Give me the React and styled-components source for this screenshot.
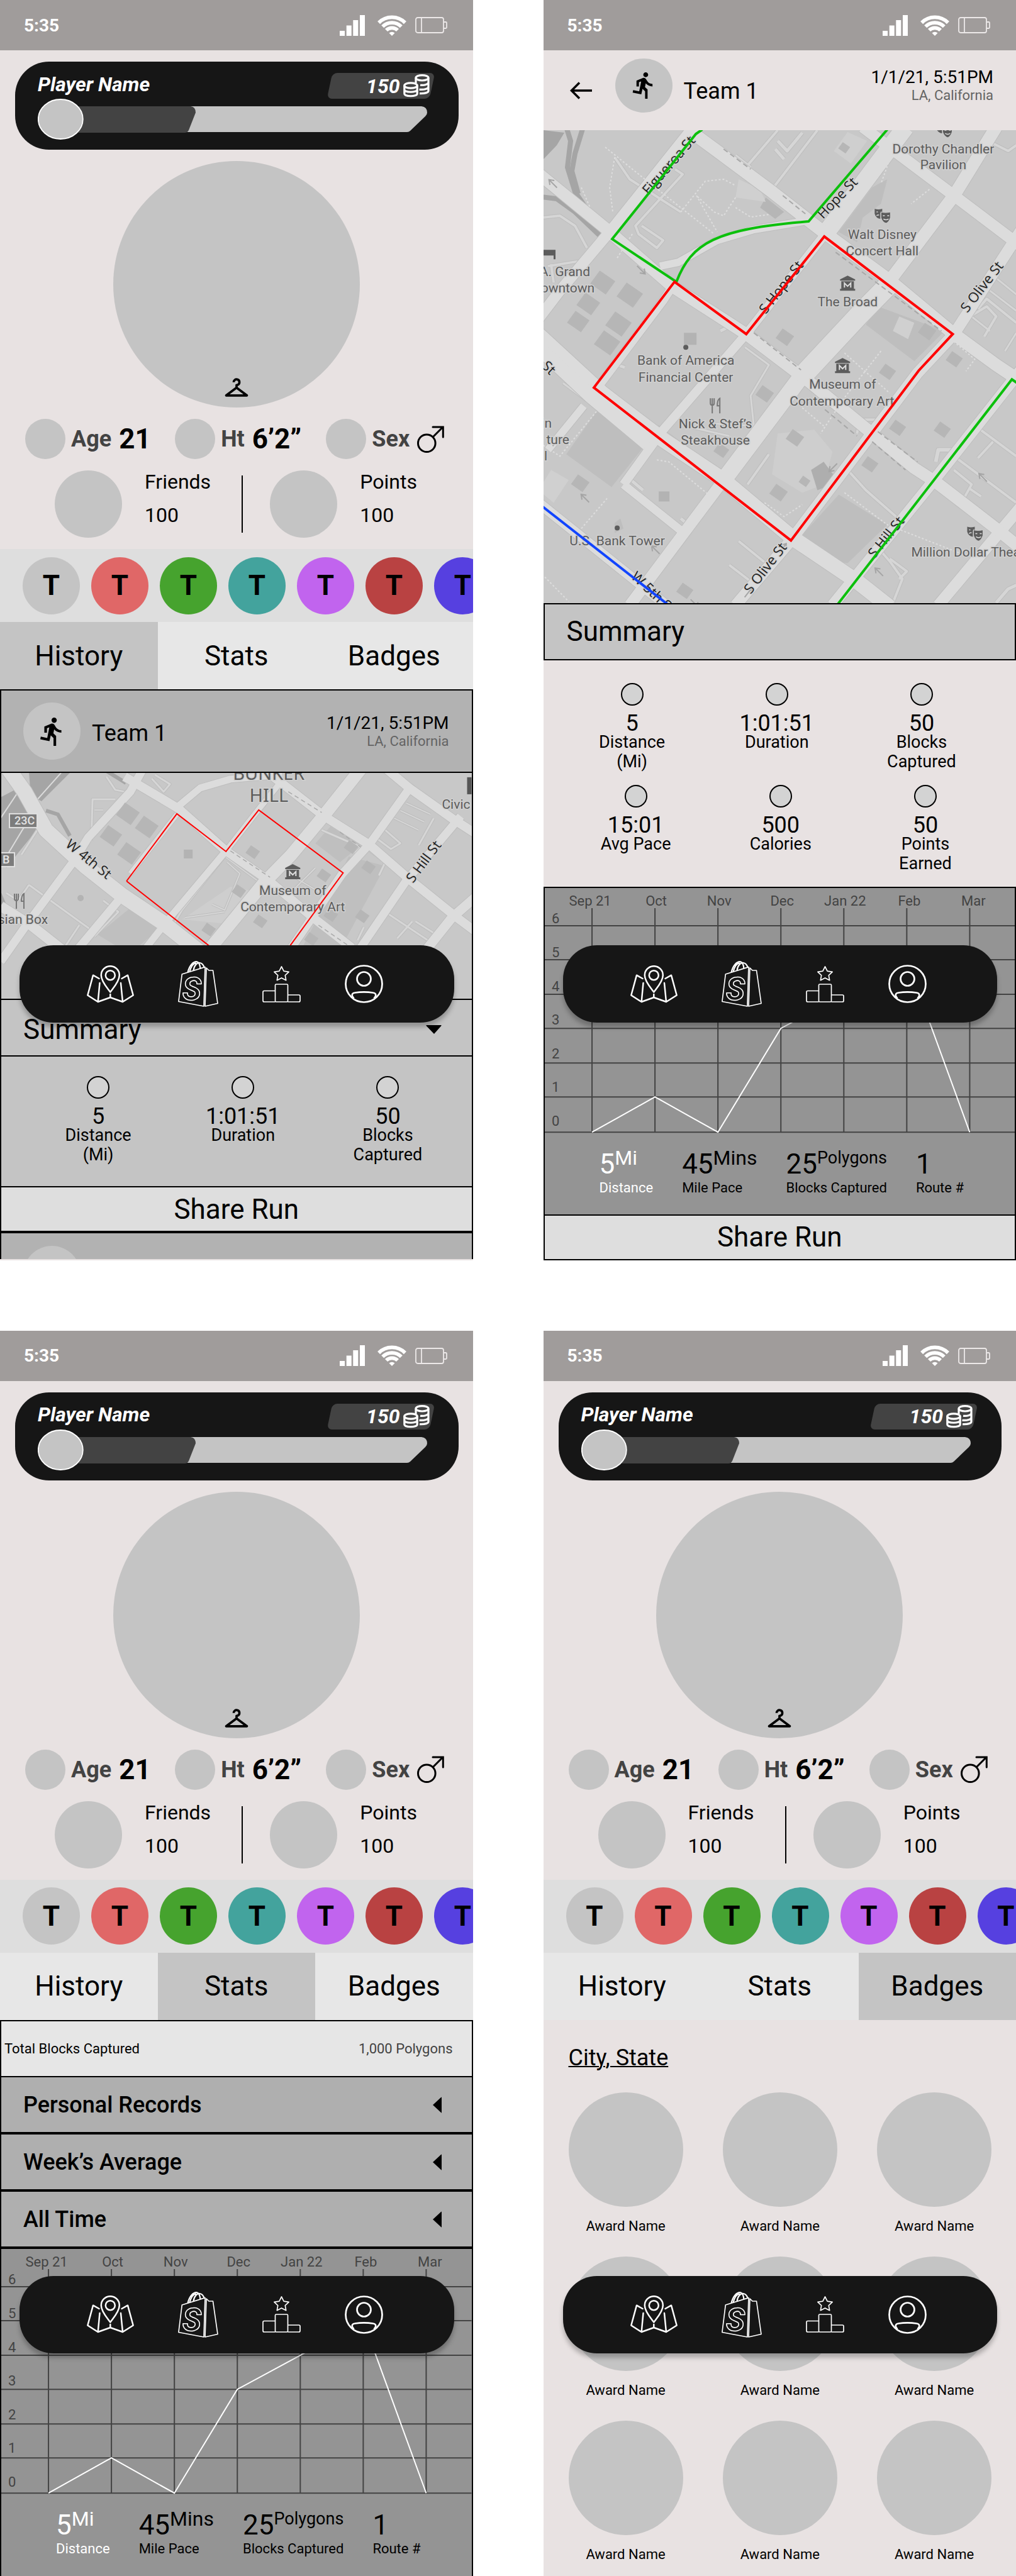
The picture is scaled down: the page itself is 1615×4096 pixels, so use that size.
import React, { useState } from "react";
import styled, { createGlobalStyle } from "styled-components";
import { MdCheckroom, MdDirectionsRun } from "react-icons/md";

const GlobalStyle = createGlobalStyle`
  *, *::before, *::after { box-sizing: border-box; }
  body { margin: 0; background: #fff; color: #000; font-family: Roboto, "Liberation Sans", sans-serif; }
  button { font: inherit; color: inherit; background: none; border: 0; padding: 0; margin: 0; cursor: pointer; }
  svg { display: block; }
  p, h1, h2, h3, ul, dl, dd, dt { margin: 0; padding: 0; font-weight: 400; }
`;

/* ---------- shell ---------- */

const Board = styled.main`
  display: grid;
  grid-template-columns: 1fr 1fr;
  column-gap: 112px;
  row-gap: 112px;
`;

const Screen = styled.section`
  position: relative;
  display: flex;
  flex-direction: column;
  min-width: 0;
  overflow: hidden;
  background: #e8e2e2;
`;

const StatusBarRoot = styled.header`
  display: flex;
  align-items: center;
  justify-content: space-between;
  height: 80px;
  padding: 0 41px 0 38px;
  background: #a09c9b;
  color: #fff;
  font-size: 28px;
  font-weight: 700;
`;

const StatusIcons = styled.div`
  display: flex;
  align-items: center;

  svg + svg { margin-left: 20px; }
  svg:last-child { margin-left: 14px; }
`;

function StatusBar() {
  return (
    <StatusBarRoot>
      <span>5:35</span>
      <StatusIcons aria-hidden="true">
        <svg width="40" height="33" viewBox="0 0 40 33" fill="#fff">
          <path d="M0 25h8v8H0zM10.7 16.5h8V33h-8zM21.3 8h8v25h-8zM32 0h8v33h-8z" />
        </svg>
        <svg width="46" height="33" viewBox="0 0 46 33" fill="none" stroke="#fff" strokeWidth="5.8">
          <path d="M2.1 12.1a29.5 29.5 0 0 1 41.8 0" />
          <path d="M8.2 18.2a21 21 0 0 1 29.6 0" />
          <path d="M14 24a12.8 12.8 0 0 1 18 0" />
          <path d="M23 33l-4.5-4.5a6.4 6.4 0 0 1 9 0z" fill="#fff" stroke="none" />
        </svg>
        <svg width="51" height="26" viewBox="0 0 51 26" fill="none" stroke="#ece8e8" strokeWidth="1.8">
          <rect x="1" y="1" width="44" height="24" rx="3" />
          <path d="M10 1v24M45 8h3.5q1.500 0 1.500 1.500v7q0 1.500-1.500 1.500H45" />
        </svg>
      </StatusIcons>
    </StatusBarRoot>
  );
}

/* ---------- floating navigation ---------- */

const NavBar = styled.nav`
  position: absolute;
  top: 1503px;
  left: 31px;
  right: 30px;
  display: flex;
  align-items: center;
  gap: 70px;
  height: 123px;
  padding-left: 107px;
  border-radius: 54px;
  background: #161616;
  box-shadow: 0 7px 7px rgba(0, 0, 0, 0.25);
`;

const NavButton = styled.button`
  display: flex;
  align-items: center;
  height: 73px;
`;

const MapIcon = () => (
  <svg width="75" height="60" viewBox="0 0 75 60" fill="none" stroke="#fff" strokeWidth="2.5" strokeLinecap="round" strokeLinejoin="round">
    <path d="M37.300 42.500C34 37.500 22.800 26 22.800 15.700a14.500 14.500 0 0 1 29 0C51.800 26 40.600 37.500 37.300 42.500z" />
    <circle cx="37.300" cy="15.700" r="7.500" />
    <path d="M19.500 21L10 15.700 1.300 47.500 17.700 58l19.600-7L57 58l16.700-10.500L65 15.700 55.500 21M20.500 28l-2.800 30M54 28l3 30M37.300 46v5" />
  </svg>
);

const ShopIcon = () => (
  <svg width="64" height="73" viewBox="0 0 64 73" fill="none" stroke="#fff" strokeWidth="1.700" strokeLinejoin="round">
    <path d="M6.300 21L43 9.600 41 72 .9 64.500zM45 11l4 4h6.500l7.500 52.500L43 72z" />
    <path d="M15.500 18C18 7 24 1 29.500 1.200 33.500 1.500 35 8 35.500 12M24.500 15c1-8 6-12.500 10-12 4 .5 6 4 7 7M18.500 17C21 8 25 3.500 29 3.500" strokeWidth="2.200" />
    <text x="7" y="62" fontFamily="Roboto, sans-serif" fontWeight="700" fontStyle="italic" fontSize="50" strokeWidth="1.600">S</text>
  </svg>
);

const PodiumIcon = () => (
  <svg width="61" height="58" viewBox="0 0 61 58" fill="none" stroke="#fff" strokeWidth="1.700" strokeLinejoin="round">
    <rect x="20.500" y="29" width="20" height="28" rx="1.500" />
    <path d="M20.500 39.500H3q-2 0-2 2V55q0 2 2 2h17.500M40.500 46H58q2 0 2 2v7q0 2-2 2H40.500" />
    <path d="M30.500 1l3.600 7.200 8 1.100-5.800 5.500 1.400 7.900-7.200-3.800-7.200 3.800 1.400-7.900-5.800-5.500 8-1.100z" />
  </svg>
);

const UserIcon = () => (
  <svg width="61" height="61" viewBox="0 0 61 61" fill="none" stroke="#fff" strokeWidth="2.700">
    <circle cx="30.500" cy="30.500" r="29" />
    <circle cx="30.500" cy="22.500" r="11" />
    <path d="M14.500 53.500C9.500 48 12 45 16 44.500q14.500-2.200 29 0c4 .5 6.500 3.500 1.500 9" />
  </svg>
);

function BottomNav() {
  return (
    <NavBar aria-label="Main">
      <NavButton aria-label="Map"><MapIcon /></NavButton>
      <NavButton aria-label="Shop"><ShopIcon /></NavButton>
      <NavButton aria-label="Leaderboard"><PodiumIcon /></NavButton>
      <NavButton aria-label="Profile"><UserIcon /></NavButton>
    </NavBar>
  );
}

/* ---------- profile ---------- */

const Dot = styled.span`
  flex: none;
  display: block;
  width: ${(p) => p.$size}px;
  height: ${(p) => p.$height || p.$size}px;
  border-radius: 50%;
  background: #c4c4c4;
`;

const ProfileRoot = styled.div`
  display: flex;
  flex-direction: column;
  gap: 18px;
  padding: 18px 0;
`;

const PlayerCard = styled.div`
  height: 140px;
  margin: 0 23px 0 24px;
  padding: 18px 38px 17px 36px;
  border-radius: 54px;
  background: #161616;
  color: #fff;
`;

const PlayerTop = styled.div`
  display: flex;
  align-items: center;
  justify-content: space-between;
  height: 41px;
  font-size: 32px;
  line-height: 36px;
  font-weight: 700;
  font-style: italic;
`;

const PlayerName = styled.h1`
  font-size: inherit;
  font-weight: inherit;
  padding-bottom: 6px;
`;

const CoinPill = styled.div`
  position: relative;
  display: flex;
  align-items: center;
  justify-content: flex-end;
  gap: 5px;
  width: 171px;
  height: 41px;
  padding-right: 8px;
  isolation: isolate;

  &::before {
    content: "";
    position: absolute;
    z-index: -1;
    inset: 0 4px;
    border-radius: 8px;
    background: #434343;
    transform: skewX(-12deg);
  }
`;

const Gauge = styled.svg`
  width: 100%;
  height: 65px;
`;

const Avatar = styled.div`
  display: flex;
  justify-content: center;
  align-items: flex-end;
  align-self: center;
  width: 392px;
  height: 392px;
  padding-bottom: 10px;
  border-radius: 50%;
  background: #c4c4c4;
`;

const Facts = styled.dl`
  display: grid;
  grid-template-columns: 238fr 240fr 194fr;
  padding: 0 39px 0 40px;
`;

const Fact = styled.div`
  display: flex;
  align-items: center;
  height: 64px;
  white-space: nowrap;

  dt {
    margin-left: 9px;
    font-size: 36px;
    font-weight: 700;
    color: #434343;
  }

  dd {
    margin-left: 12px;
    font-size: 44px;
    font-weight: 700;
  }
`;

const Counters = styled.div`
  display: flex;
  height: 107px;
  padding-left: 87px;
`;

const Counter = styled.div`
  display: flex;
  gap: 36px;
  flex: 297 1 0;
  font-size: 32px;
  line-height: 36px;

  &:last-child { flex-grow: 322; }
`;

const CounterText = styled.div`
  display: flex;
  flex-direction: column;
  gap: 17px;
`;

const Divider = styled.span`
  align-self: center;
  width: 2px;
  height: 91px;
  margin-right: 43px;
  background: #000;
`;

const Teams = styled.ul`
  display: flex;
  align-items: center;
  gap: 18px;
  height: 116px;
  padding-left: 36px;
  overflow: hidden;
  background: #dedede;
  list-style: none;
`;

const TeamBadge = styled.button`
  display: grid;
  place-items: center;
  width: 91px;
  height: 91px;
  border-radius: 50%;
  background: ${(p) => p.$color};
  font-size: 44px;
  font-weight: 700;
`;

const Tabs = styled.div`
  display: grid;
  grid-template-columns: 1fr 1fr 1fr;
  height: 107px;
`;

const Tab = styled.button`
  font-size: 44px;
  background: ${(p) => (p.$active ? "#c4c4c4" : "#e7e7e7")};
`;

const teamColors = ["#c4c4c4", "#e06767", "#46a32e", "#43a39d", "#c164ee", "#b94242", "#5640e0"];

const Coins = () => (
  <svg width="42" height="37" viewBox="0 0 42 37" fill="none" stroke="#fff" strokeWidth="3.200" aria-hidden="true">
    <ellipse cx="30" cy="5.800" rx="10" ry="4.200" />
    <path d="M20 6v8M40 6v20.500c0 2.500-5 4.500-14 4.100M40 13c0 3-6 5-13 4.300M40 20c0 3-6 5-14.500 4.300" />
    <ellipse cx="12" cy="18" rx="10.200" ry="4.200" />
    <path d="M1.800 18v13c0 5 20.400 5 20.400 0V18M1.800 24.500c0 5 20.400 5 20.400 0" />
  </svg>
);

const MaleIcon = () => (
  <svg width="43" height="43" viewBox="0 0 43 43" fill="none" stroke="#000" strokeWidth="3" strokeLinecap="round" role="img" aria-label="Male">
    <circle cx="15.300" cy="27.700" r="13.800" />
    <path d="M26 17L41 2M25 2h16.300v16" />
  </svg>
);

function Profile({ tab, onTab }) {
  return (
    <>
      <ProfileRoot>
        <PlayerCard>
          <PlayerTop>
            <PlayerName>Player Name</PlayerName>
            <CoinPill>
              150
              <Coins />
            </CoinPill>
          </PlayerTop>
          <Gauge viewBox="0 0 630 65" preserveAspectRatio="xMinYMid meet" role="img" aria-label="Level progress">
            <path d="M60 12H610q9 1 9 10 0 3-3 6L592 51q-2 2-5 2H60z" fill="#c4c4c4" />
            <path d="M60 12H243q8 1 8 10L240 50q-2 4-6 4H60z" fill="#434343" />
            <ellipse cx="36.300" cy="32.500" rx="35.500" ry="31.500" fill="#c4c4c4" stroke="#fff" strokeWidth="1.800" />
          </Gauge>
        </PlayerCard>
        <Avatar>
          <MdCheckroom size={44} aria-label="Change outfit" />
        </Avatar>
        <Facts>
          <Fact><Dot $size={64} /><dt>Age</dt><dd>21</dd></Fact>
          <Fact><Dot $size={64} /><dt>Ht</dt><dd>6’2”</dd></Fact>
          <Fact><Dot $size={64} /><dt>Sex</dt><dd><MaleIcon /></dd></Fact>
        </Facts>
        <Counters>
          <Counter>
            <Dot $size={107} />
            <CounterText><span>Friends</span><span>100</span></CounterText>
          </Counter>
          <Divider />
          <Counter>
            <Dot $size={107} />
            <CounterText><span>Points</span><span>100</span></CounterText>
          </Counter>
        </Counters>
      </ProfileRoot>
      <Teams>
        {teamColors.map((color) => (
          <li key={color}><TeamBadge $color={color}>T</TeamBadge></li>
        ))}
      </Teams>
      <Tabs role="tablist">
        {["History", "Stats", "Badges"].map((name) => (
          <Tab key={name} role="tab" aria-selected={tab === name} $active={tab === name} onClick={() => onTab && onTab(name)}>
            {name}
          </Tab>
        ))}
      </Tabs>
    </>
  );
}

/* ---------- run header, summary, share ---------- */

const RunHeader = styled.div`
  display: flex;
  align-items: center;
  height: ${(p) => p.$height}px;
  padding: 0 36px ${(p) => p.$bottom || 0}px ${(p) => p.$left}px;
`;

const RunBadge = styled.span`
  display: grid;
  place-items: center;
  flex: none;
  width: 91px;
  height: ${(p) => p.$height}px;
  border-radius: 50%;
  background: #c4c4c4;
`;

const RunTeam = styled.h2`
  flex: 1;
  padding: ${(p) => p.$drop}px 0 0 18px;
  font-size: 36px;
  line-height: 42px;
`;

const RunWhen = styled.div`
  text-align: right;
  font-size: 28px;
  line-height: 32px;

  small {
    display: block;
    font-size: 22px;
    line-height: 26px;
    color: #646464;
  }
`;

const BackButton = styled.button`
  margin: 16px 37px 0 0;
`;

const SummaryBar = styled.button`
  display: flex;
  align-items: center;
  justify-content: space-between;
  width: 100%;
  height: ${(p) => p.$height}px;
  padding: ${(p) => p.$top}px 48px 0 35px;
  border: solid #000;
  border-width: ${(p) => p.$border};
  background: #c4c4c4;
  font-size: 44px;
  text-align: left;
`;

const StatRow = styled.dl`
  display: grid;
  grid-template-columns: repeat(3, 1fr);
  padding: ${(p) => p.$pad};
`;

const Stat = styled.div`
  display: flex;
  flex-direction: column;
  align-items: center;
  min-height: 148px;
  text-align: center;
  font-size: 27px;
  line-height: 31px;

  &::before {
    content: "";
    width: 36px;
    height: 36px;
    margin-bottom: 13px;
    border: 2px solid #000;
    border-radius: 50%;
    background: #d3d3d3;
  }

  dd {
    order: 1;
    font-size: 36px;
    line-height: 30px;
  }

  dt {
    order: 2;
    white-space: pre-line;
  }
`;

const ShareButton = styled.button`
  width: 100%;
  height: 71px;
  border-top: 2px solid #000;
  background: #dedede;
  font-size: 44px;
  line-height: 52px;
`;

const Caret = styled.svg`
  flex: none;
`;

function Stats({ items, pad }) {
  return (
    <StatRow $pad={pad}>
      {items.map(([value, label]) => (
        <Stat key={label}><dt>{label}</dt><dd>{value}</dd></Stat>
      ))}
    </StatRow>
  );
}

const firstStats = [["5", "Distance\n(Mi)"], ["1:01:51", "Duration"], ["50", "Blocks\nCaptured"]];
const moreStats = [["15:01", "Avg Pace"], ["500", "Calories"], ["50", "Points\nEarned"]];

/* ---------- maps ---------- */

const MapCanvas = styled.svg`
  width: 100%;
  height: ${(p) => p.$height || "auto"};
  background: #c8c8c8;
`;

/* Turns surveyed "x,y x,y" pairs into a polyline string in canvas units. */
const survey = (originX, originY, kx, ky) => (pairs) =>
  pairs
    .split(" ")
    .map((pair) => {
      const [x, y] = pair.split(",").map(Number);
      return `${Math.round((x - originX) * kx)},${Math.round((y - originY) * ky)}`;
    })
    .join(" ");

function Roads({ list, at, color = "#dcdcdc" }) {
  return (
    <g fill="none" strokeLinejoin="round">
      <g stroke="#bdbdbd">
        {list.map(([w, pts], i) => <polyline key={i} points={at(pts)} strokeWidth={w + 2} />)}
      </g>
      <g stroke={color}>
        {list.map(([w, pts], i) => <polyline key={i} points={at(pts)} strokeWidth={w} />)}
      </g>
    </g>
  );
}

function Building({ x, y, s = 11 }) {
  return <path d={`M${x - s * 0.3} ${y - s}l${s * 1.3} ${s * 0.9} ${-s * 0.8} ${s * 1.1} ${-s * 1.3} ${-s * 0.9}z`} fill="#b6b6b6" />;
}

function MuseumMark({ x, y }) {
  return (
    <g transform={`translate(${x - 12} ${y - 12})`} fill="#5c5c5c">
      <path d="M12 0l12 6v2H0V6zM2 9h20v12H2zM0 21h24v3H0z" />
      <path d="M7 19v-7l5 5 5-5v7" fill="none" stroke="#ddd" strokeWidth="2" />
    </g>
  );
}

function TheatreMark({ x, y }) {
  return (
    <g transform={`translate(${x - 12} ${y - 12})`} fill="#5c5c5c">
      <path d="M0 1q6 2 12 0v6H9v10q-7-1-9-8z" />
      <path d="M10 6q7 2 15 0v9q-2 7-7 9-6-2-8-9z" stroke="#ccc" strokeWidth="1" />
      <path d="M13 12h3m4 0h3M14 17q4 3 8 0M3 6h2M3 12q2-2 4-1" stroke="#ddd" strokeWidth="1.500" fill="none" />
    </g>
  );
}

function ForkMark({ x, y }) {
  return (
    <path
      d={`M${x - 8} ${y - 12}v8q0 3 3 3v13M${x - 5} ${y - 12}v10M${x - 2} ${y - 12}v8q0 3-3 3M${x + 7} ${y + 12}v-24q-4 2-4 12h4`}
      fill="none" stroke="#777" strokeWidth="2"
    />
  );
}

const mapFont = { fontFamily: 'Roboto, "Liberation Sans", sans-serif', fill: "#5c5c5c", fontSize: 21, stroke: "#d0d0d0", strokeWidth: 3, paintOrder: "stroke" };
const streetFont = { ...mapFont, fontFamily: '"Open Sans", Roboto, sans-serif', fill: "#222", fontSize: 22 };

function Street({ x, y, angle, children }) {
  return <text {...streetFont} transform={`translate(${x} ${y}) rotate(${angle})`}>{children}</text>;
}

const at1 = survey(3, 461, 0.4812, 0.303);
const bunkerPaths = [
  [3, "300,820 305,600 380,600"], [2, "310,655 340,655"], [3, "350,480 380,550 410,560"], [3, "500,490 540,560 560,520 510,470"],
  [3, "1310,640 1260,760 1230,830"], [2, "1340,620 1420,680"], [2, "1320,660 1400,720"], [2, "1300,700 1380,760"], [3, "1270,760 1320,830 1290,860 1240,800"],
  [3, "740,900 600,1180 560,1290"], [3, "1220,870 1270,930 1250,1000"], [3, "1430,700 1380,840"],
  [3, "95,1050 60,1130 20,1090"], [3, "95,1050 270,1250 320,1310"], [3, "340,1130 390,1190 310,1320"], [3, "260,1260 210,1380"],
  [3, "1270,1190 1420,1350"], [3, "1360,1240 1310,1330"], [3, "1370,1240 1440,1310"], [3, "1200,1270 1180,1340"], [3, "470,1140 540,1220 620,1320"],
  [2, "740,900 860,1040"], [2, "970,1070 1040,960"], [2, "960,1000 1080,1110"], [2, "750,930 790,990 740,1180 700,1150"], [2, "610,1220 740,1190"],
  [3, "1060,760 1190,850 1170,880"], [3, "130,740 70,890"],
];
const bunkerRoads = [
  [13, "470,440 430,560 290,800 240,930 90,1250 0,1450"],
  [8, "582,680 430,990"], [13, "400,1110 210,1470"], [11, "745,870 560,1220 440,1460"], [9, "930,500 860,640 745,870"],
  [20, "1190,440 1060,700 960,890 870,1040 700,1370 660,1460"],
  [13, "1355,530 1220,830 1130,990 950,1400"], [13, "1520,690 1340,1030 1180,1400"], [15, "1590,1080 1490,1220 1300,1600"],
  [11, "585,640 660,540 760,495 930,470"],
  [14, "410,480 590,650 745,870 880,1020 1040,1230 1160,1380"],
  [14, "900,480 1070,690 1220,840 1350,1020 1500,1210 1600,1330"],
  [14, "1260,420 1350,540 1500,710 1600,810"],
  [24, "10,400 80,560 150,760 280,950 400,1100 540,1250 660,1400"], [16, "0,1160 100,1260 230,1420"],
];

function BunkerHillMap() {
  return (
    <MapCanvas viewBox="0 0 747 359" preserveAspectRatio="xMidYMid slice" $height="359px" role="img" aria-label="Run route around Bunker Hill">
      <g fill="#a5a5a5">
        <polygon points={at1("95,461 230,461 135,610 100,580")} />
        <polygon points={at1("0,590 60,540 130,740 60,880 20,960 0,860")} />
        <polygon points={at1("0,1080 20,1150 0,1150")} />
      </g>
      <g fill="none" stroke="#dcdcdc" strokeWidth="2">
        <polyline points={at1("200,461 100,640")} /><polyline points={at1("60,560 0,700")} /><polyline points={at1("80,740 20,900")} />
      </g>
      <g fill="none" stroke="#a5a5a5" strokeWidth="6">
        <polyline points={at1("350,450 415,515")} /><polyline points={at1("150,658 190,680 230,790")} />
      </g>
      <g fill="#bfbfbf">
        <polygon points={at1("470,1120 545,1250 460,1366 380,1366 320,1310 420,1180")} />
        <polygon points={at1("1090,740 1190,840 1120,930 1040,830")} />
        <polygon points={at1("1150,900 1270,950 1130,1366 1000,1366")} />
        <polygon points={at1("760,1060 840,1080 730,1250 600,1230")} fill="#cecece" />
      </g>
      <Roads list={bunkerPaths} at={at1} color="#d6d6d6" />
      <Roads list={bunkerRoads} at={at1} />
      <g fill="none" stroke="#aaa" strokeWidth="1.500" strokeDasharray="7 5">
        <polyline points={at1("760,870 890,1010")} /><polyline points={at1("1120,770 1190,850")} /><polyline points={at1("950,560 1060,670")} /><polyline points={at1("1050,1260 1150,1370")} />
      </g>
      <Building x={202} y={65} s={18} /><Building x={175} y={100} s={17} /><Building x={232} y={86} s={18} /><Building x={204} y={128} s={18} />
      <path d="M290 122h14v14h-14z" fill="#b3b3b3" /><circle cx="126" cy="199" r="5" fill="#b3b3b3" />
      <Building x={400} y={126} /><Building x={378} y={188} /><Building x={412} y={236} /><Building x={330} y={249} />
      <Building x={513} y={163} /><Building x={584} y={150} /><Building x={574} y={228} /><Building x={524} y={226} /><Building x={493} y={264} /><Building x={556} y={118} />
      <text {...mapFont} fontFamily='"Noto Sans", sans-serif' fontSize="29" textAnchor="middle"><tspan x="425" y="11">BUNKER</tspan><tspan x="425" y="46">HILL</tspan></text>
      <text {...mapFont} x="700" y="57">Civic</text>
      <path d="M740 7h7v27h-7z" fill="#555" />
      <g stroke="#e0e0e0" strokeWidth="2" fill="#7c7c7c"><rect x="13" y="65" width="44" height="22" /><rect x="-10" y="127" width="31" height="22" /></g>
      <g fontFamily="Roboto, sans-serif" fontSize="18" fontWeight="500" fill="#e4e4e4"><text x="21" y="82">23C</text><text x="2" y="144">B</text></g>
      <ForkMark x={29} y={204} />
      <text {...mapFont} x="74" y="240" textAnchor="end">sian Box</text>
      <MuseumMark x={463} y={157} />
      <text {...mapFont} textAnchor="middle"><tspan x="463" y="194">Museum of</tspan><tspan x="463" y="220">Contemporary Art</tspan></text>
      <Street x={101} y={116} angle={39}>W 4th St</Street>
      <Street x={654} y={176} angle={-53}>S Hill St</Street>
      <polyline points={at1("416,1028 582,677 744,872 853,656 1131,986 860,1580 416,1028")} fill="none" stroke="#f00" strokeWidth="2" />
    </MapCanvas>
  );
}

const at2 = survey(6, 646, 0.4812, 0.3208);
const downtownPaths = [
  [4, "780,646 680,820 690,860 760,940 910,646"], [4, "640,770 690,830"], [5, "860,660 810,750 780,700"], [5, "770,740 800,790"],
  [4, "240,780 290,890 460,1050"], [4, "440,840 465,865 310,1120 320,1160 380,1230 400,1190 330,1120"], [4, "1490,710 1540,750 1567,720"],
  [4, "0,1080 60,1070 110,1120 150,1230"], [4, "20,1320 140,1290"], [4, "30,1310 40,1400"], [4, "1440,1530 1470,1480 1567,1600"], [3, "1480,1440 1567,1540"],
  [3, "1500,1380 1567,1460"], [4, "1390,1590 1470,1520 1500,1570 1460,1670"], [3, "1410,1560 1480,1640"], [3, "1530,1740 1567,1650"],
  [4, "1010,2330 1070,2430 1170,2560"], [4, "1440,2120 1567,2260"], [4, "1370,2270 1567,2490"], [4, "1490,2190 1440,2270"], [6, "1360,2230 1310,2230 1300,2290"],
  [4, "1360,2330 1420,2400 1390,2480"], [4, "1410,2420 1450,2460"], [4, "1120,2730 1150,2780 1190,2870 1160,2988"], [4, "1150,2770 1205,2830 1180,2870"],
  [5, "1500,2988 1540,2920 1567,2900"], [4, "650,2680 740,2790"], [4, "620,2800 690,2880"], [5, "460,2570 490,2610"], [5, "295,2380 335,2430"],
  [3, "380,2110 470,2210 600,2380"], [3, "70,1900 370,2230"], [3, "670,1720 750,1810 690,1960 700,2110 560,2100"], [3, "500,2120 620,2160"], [5, "250,1810 275,1820"],
  [4, "750,2250 680,2400"], [4, "1040,2150 1050,2080 1110,2080"], [5, "590,1640 620,1620 650,1650"],
];
const downtownRoads = [
  [17, "500,630 230,1140 60,1440 -20,1600"],
  [13, "440,1400 400,1490 190,1910"], [12, "140,2010 20,2230"], [14, "930,1170 675,1655 400,2130 270,2400"], [13, "270,2400 470,2640"],
  [28, "1200,630 1110,810 930,1170"], [20, "1500,630 1360,970 1150,1390"], [32, "1160,1390 1050,1560 850,1880"], [26, "1050,1560 850,1880 600,2380"],
  [18, "600,2380 470,2640 290,3000"],
  [18, "1600,1100 1360,1655 1240,1850 820,2680 640,3000"],
  [18, "1600,1800 1290,2390 960,3000"], [18, "1600,2480 1310,3000"],
  [12, "390,1320 450,1300 580,1190 700,1140 900,1090"],
  [19, "-10,860 215,1140 430,1420 675,1655 880,1890 1230,2320 1300,2390 1500,2620 1600,2740"],
  [20, "480,640 590,760 760,950 930,1150 1150,1390 1360,1655 1500,1810 1600,1910"],
  [18, "1060,630 1360,970 1600,1240"],
  [24, "-10,1660 200,1950 400,2180 600,2380 830,2670 1040,2880 1150,3010"],
  [22, "-10,1720 160,1960 350,2200"],
  [16, "-10,2490 420,3010"],
];

function DowntownMap() {
  return (
    <MapCanvas viewBox="0 0 751 751" role="img" aria-label="Captured blocks in downtown Los Angeles">
      <polygon points={at2("6,646 75,660 50,720 6,790")} fill="#a5a5a5" />
      <g fill="none" stroke="#a5a5a5" strokeWidth="8">
        <polyline points={at2("82,640 95,700 85,830 110,950 145,1030")} /><polyline points={at2("135,640 110,760 100,850 120,960")} />
        <polyline points={at2("0,975 50,985 110,1050 200,1180")} />
      </g>
      <g fill="#bebebe">
        <polygon points={at2("180,2040 350,2190 230,2415 80,2250")} />
        <polygon points={at2("980,2450 1140,2600 1010,2790 960,2780 860,2650")} />
        <polygon points={at2("1090,930 1140,890 1120,1010 1060,1080 1040,1200 980,1150")} />
        <polygon points={at2("1110,1520 1330,1640 1230,1790 1070,1610")} />
        <polygon points={at2("740,980 800,1050 770,1085 720,1030")} fill="#b6b6b6" />
        <polygon points={at2("650,890 720,940 740,1000 640,980")} fill="#d0d0d0" />
        <polygon points={at2("1180,1570 1230,1600 1210,1680 1160,1640")} fill="#d0d0d0" />
        <polygon points={at2("30,2330 90,2380 40,2490 -10,2430")} fill="#d0d0d0" />
        <polygon points={at2("780,2150 900,2130 960,2240 930,2400 860,2440 760,2350")} fill="#cecece" />
        <polygon points={at2("1010,655 1075,700 1020,810 965,750")} fill="#cfcfcf" />
        <polygon points={at2("890,2330 930,2290 980,2390 910,2430")} fill="#aeaeae" />
        <polygon points={at2("240,2590 260,2570 270,2620 240,2640")} />
      </g>
      <Roads list={downtownPaths} at={at2} color="#d6d6d6" />
      <Roads list={downtownRoads} at={at2} />
      <g fill="none" stroke="#ddd" strokeWidth="2" strokeDasharray="3 3">
        <polyline points={at2("210,730 340,890 570,1160")} /><polyline points={at2("240,780 225,930 235,1050")} />
        <polyline points={at2("460,1050 540,900 600,890 640,920")} /><polyline points={at2("510,970 580,1150")} /><polyline points={at2("640,980 600,1070 570,1050 510,970")} />
        <polyline points={at2("640,1030 690,1075 750,1065")} /><polyline points={at2("130,930 160,1030")} /><polyline points={at2("300,1160 250,1280")} />
        <polyline points={at2("380,2280 420,2290 550,2450")} /><polyline points={at2("215,2470 130,2620")} /><polyline points={at2("735,2490 800,2560 860,2500")} />
        <polyline points={at2("1000,2440 1140,2600 1380,2740")} /><polyline points={at2("1000,1750 1150,1950")} /><polyline points={at2("1120,1740 1000,1970 920,2150")} />
        <polyline points={at2("180,2040 60,2260 0,2200")} /><polyline points={at2("1350,1680 1430,1780 1400,1840")} /><polyline points={at2("860,2020 930,2110")} />
        <polyline points={at2("1150,790 1120,910")} /><polyline points={at2("10,2860 90,2980")} /><polyline points={at2("1280,940 1220,1010")} />
      </g>
      <g fill="none" stroke="#a8a8a8" strokeWidth="2" strokeDasharray="8 5">
        <polyline points={at2("600,740 690,840")} /><polyline points={at2("795,970 870,1060")} /><polyline points={at2("970,1250 1140,1440 1320,1640")} />
        <polyline points={at2("700,1650 855,1835")} /><polyline points={at2("935,2030 1040,2160")} /><polyline points={at2("1110,2140 1240,2290")} /><polyline points={at2("1090,2190 1200,2330")} />
      </g>
      <g fill="none" stroke="#a5a5a5" strokeWidth="2">
        {[[15, 85, 225], [155, 222, 45], [66, 585, 225], [95, 650, 45], [178, 667, 225], [240, 752, 45], [460, 536, 135], [380, 664, -52], [325, 735, -52], [533, 702, 225], [698, 552, 225], [20, 495, -52]].map(([x, y, a]) => (
          <path key={`${x}-${y}`} transform={`translate(${x} ${y}) rotate(${a})`} d="M-9 0H8M2-5l7 5-7 5" />
        ))}
      </g>
      <Building x={95} y={242} s={19} /><Building x={72} y={276} s={18} /><Building x={138} y={262} s={20} /><Building x={56} y={304} s={17} /><Building x={120} y={308} s={20} /><Building x={102} y={338} s={20} />
      <path d="M223 322h20v19h-20z" fill="#b3b3b3" />
      <Building x={384} y={329} s={14} /><Building x={352} y={419} s={14} /><Building x={283} y={509} s={12} /><Building x={400} y={489} s={14} /><Building x={374} y={576} s={14} /><Building x={415} y={558} s={9} />
      <Building x={610} y={320} s={14} /><Building x={547} y={384} s={13} /><Building x={653} y={364} s={13} /><Building x={563} y={473} s={13} /><Building x={634} y={476} s={13} /><Building x={519} y={531} s={13} />
      <Building x={59} y={561} s={14} /><path d="M183 574h17v16h-17z" fill="#b3b3b3" /><Building x={225} y={732} s={13} /><Building x={478} y={28} s={9} />
      <TheatreMark x={636} y={0} />
      <TheatreMark x={538} y={136} />
      <TheatreMark x={685} y={641} />
      <MuseumMark x={483} y={243} />
      <MuseumMark x={475} y={374} />
      <ForkMark x={273} y={438} />
      <path d="M0 190h19v15h-3v-6H0z" fill="#5c5c5c" />
      <circle cx="226" cy="345" r="4" fill="#5c5c5c" /><circle cx="117" cy="632" r="4" fill="#5c5c5c" />
      <text {...mapFont} textAnchor="middle">
        <tspan x="635" y="37">Dorothy Chandler</tspan><tspan x="635" y="62">Pavilion</tspan>
        <tspan x="538" y="173">Walt Disney</tspan><tspan x="538" y="199">Concert Hall</tspan>
        <tspan x="483" y="280">The Broad</tspan>
        <tspan x="226" y="373">Bank of America</tspan><tspan x="226" y="400">Financial Center</tspan>
        <tspan x="475" y="411">Museum of</tspan><tspan x="474" y="438">Contemporary Art</tspan>
        <tspan x="273" y="474">Nick &amp; Stef’s</tspan><tspan x="273" y="500">Steakhouse</tspan>
        <tspan x="117" y="660">U.S. Bank Tower</tspan>
      </text>
      <text {...mapFont} x="584" y="678">Million Dollar Thea</text>
      <text {...mapFont} textAnchor="end">
        <tspan x="74" y="232">A. Grand</tspan><tspan x="81" y="258">owntown</tspan>
        <tspan x="13" y="473">in</tspan><tspan x="41" y="499">ture</tspan><tspan x="6" y="525">l</tspan>
      </text>
      <Street x={167} y={104} angle={-49}>Figueroa St</Street>
      <Street x={444} y={142} angle={-46}>Hope St</Street>
      <Street x={353} y={293} angle={-52}>S Hope St</Street>
      <Street x={673} y={291} angle={-52}>S Olive St</Street>
      <Street x={-4} y={376} angle={44}>St</Street>
      <Street x={138} y={711} angle={43}>W 5th St</Street>
      <Street x={329} y={738} angle={-52}>S Olive St</Street>
      <Street x={526} y={681} angle={-51}>S Hill St</Street>
      <g fill="none" strokeWidth="4">
        <path d="M252-1l-10 7-77 97-56 70 102 68c24-62 62-84 210-96L546-1" stroke="#0cc00c" />
        <polyline points={at2("975,2998 1553,1880 1580,1910")} stroke="#0cc00c" />
        <polyline points={at2("0,2508 420,3000")} stroke="#1245ff" />
        <polygon points={at2("438,1398 675,1655 933,1172 1357,1655 1245,1837 822,2678 172,1920")} stroke="#f00" />
      </g>
    </MapCanvas>
  );
}

/* ---------- chart ---------- */

const ChartRoot = styled.div`
  height: ${(p) => p.$height}px;
  background: #949494;
`;

const ChartSvg = styled.svg`
  width: 100%;
  height: auto;
`;

const Metrics = styled.div`
  display: flex;
  gap: 46px;
  padding: 22px 0 0 87px;
`;

const Metric = styled.div`
  color: ${(p) => (p.$light ? "#fff" : "#000")};
  font-size: 22px;
  line-height: 26px;
  white-space: nowrap;

  strong {
    display: flex;
    height: 50px;
    font-size: 44px;
    line-height: 50px;
    font-weight: 400;
  }

  small {
    font-size: ${(p) => p.$unit}px;
    line-height: 30px;
  }
`;

const months = ["Sep 21", "Oct", "Nov", "Dec", "Jan 22", "Feb", "Mar"];
const series = [0, 1, 0, 3, 4, 5, 0];
const monthX = (i) => 75 + i * 100;
const levelY = (v) => (v === 0 ? 388 : 387 - Math.round(v * 54.5));

function Chart({ height }) {
  return (
    <ChartRoot $height={height}>
      <ChartSvg viewBox="0 0 747 392" role="img" aria-label="Monthly distance">
        <g stroke="#434343" strokeWidth="2">
          {months.map((m, i) => <line key={m} x1={monthX(i)} x2={monthX(i)} y1="32" y2="388" />)}
          {series.map((_, v) => <line key={v} x1="0" x2="747" y1={levelY(v)} y2={levelY(v)} />)}
        </g>
        <g fill="#434343" fontFamily="Roboto, sans-serif" fontSize="22">
          {months.map((m, i) => <text key={m} x={monthX(i) + (i === 0 ? -3 : i === 6 ? 6 : i === 5 ? 4 : 2)} y="28" textAnchor="middle">{m}</text>)}
          {series.map((_, v) => <text key={v} x="11" y={378 - Math.round(v * 53.6)}>{v}</text>)}
        </g>
        <polyline points={series.map((v, i) => `${monthX(i)},${levelY(v)}`).join(" ")} fill="none" stroke="#fff" strokeWidth="2" />
      </ChartSvg>
      <Metrics>
        <Metric $light $unit={32}><strong>5<small>Mi</small></strong>Distance</Metric>
        <Metric $unit={32}><strong>45<small>Mins</small></strong>Mile Pace</Metric>
        <Metric $unit={27}><strong>25<small>Polygons</small></strong>Blocks Captured</Metric>
        <Metric $unit={27}><strong>1</strong>Route #</Metric>
      </Metrics>
    </ChartRoot>
  );
}

/* ---------- panels ---------- */

const Panel = styled.div`
  border: solid #000;
  border-width: ${(p) => p.$border || "2px"};
  background: ${(p) => p.$bg || "transparent"};
`;

const RunCard = styled.article`
  background: #c4c4c4;
  border-bottom: 4px solid #000;
`;

const RunCardTop = styled.div`
  height: 131px;
  border-bottom: 2px solid #000;
  background: #b2b2b2;
`;

const NextRun = styled.article`
  height: 41px;
  overflow: hidden;
  background: #b2b2b2;
`;

const TotalRow = styled.div`
  display: flex;
  align-items: center;
  justify-content: space-between;
  height: 89px;
  padding: 0 30px 0 5px;
  border-bottom: 2px solid #000;
  background: #e6e6e6;
  font-size: 22px;

  span { color: #434343; }
`;

const AccordionButton = styled.button`
  display: flex;
  align-items: center;
  justify-content: space-between;
  width: 100%;
  height: 91px;
  padding: 2px 48px 0 35px;
  border-bottom: 4px solid #000;
  background: #afafaf;
  font-size: 36px;
  font-weight: 500;
`;

const BadgeTitle = styled.h2`
  padding: 46px 0 41px 40px;
  font-size: 36px;
  line-height: 28px;
  text-decoration: underline;
  text-decoration-thickness: 2px;
`;

const BadgeGrid = styled.ul`
  display: grid;
  grid-template-columns: repeat(3, 182px);
  justify-content: space-between;
  row-gap: 32px;
  padding: 0 39px 14px 40px;
  list-style: none;
`;

const BadgeItem = styled.li`
  display: flex;
  flex-direction: column;
  align-items: center;
  gap: 15px;
  font-size: 22px;
  line-height: 32px;
`;

function RunInfo({ drop = 6 }) {
  return (
    <>
      <RunTeam $drop={drop}>Team 1</RunTeam>
      <RunWhen>1/1/21, 5:51PM<small>LA, California</small></RunWhen>
    </>
  );
}

function HistoryScreen() {
  const [open, setOpen] = useState(true);
  return (
    <Screen>
      <StatusBar />
      <Profile tab="History" />
      <Panel $border="2px 2px 0">
        <RunCard>
          <RunCardTop>
            <RunHeader $height={129} $left={35}>
              <RunBadge $height={91}><MdDirectionsRun size={50} /></RunBadge>
              <RunInfo />
            </RunHeader>
          </RunCardTop>
          <BunkerHillMap />
          <SummaryBar $height={92} $top={6} $border="2px 0" aria-expanded={open} onClick={() => setOpen(!open)}>
            Summary
            <Caret width="25" height="14" viewBox="0 0 25 14" aria-hidden="true"><path d="M1 0h23q1 0 .5 1L13 14 .5 1Q0 0 1 0z" /></Caret>
          </SummaryBar>
          {open && <Stats items={firstStats} pad="31px 18px 27px 39px" />}
          <ShareButton>Share Run</ShareButton>
        </RunCard>
        <NextRun>
          <RunHeader $height={131} $left={35}>
            <RunBadge $height={91} />
          </RunHeader>
        </NextRun>
      </Panel>
      <BottomNav />
    </Screen>
  );
}

function RunScreen() {
  return (
    <Screen>
      <StatusBar />
      <RunHeader $height={127} $left={42} $bottom={16}>
        <BackButton aria-label="Back">
          <svg width="35" height="28" viewBox="0 0 35 28" fill="none" stroke="#000" strokeWidth="3.500"><path d="M35 14H3M15 1.500L2.500 14 15 26.500" /></svg>
        </BackButton>
        <RunBadge $height={86}><MdDirectionsRun size={47} /></RunBadge>
        <RunInfo drop={18} />
      </RunHeader>
      <DowntownMap />
      <SummaryBar as="div" $height={91} $top={0} $border="2px">Summary</SummaryBar>
      <Stats items={firstStats} pad="36px 35px 0 26px" />
      <Stats items={moreStats} pad="14px 29px 14px 32px" />
      <Panel>
        <Chart height={519} />
        <ShareButton>Share Run</ShareButton>
      </Panel>
      <BottomNav />
    </Screen>
  );
}

function StatsScreen() {
  return (
    <Screen>
      <StatusBar />
      <Profile tab="Stats" />
      <Panel>
        <TotalRow>Total Blocks Captured<span>1,000 Polygons</span></TotalRow>
        {["Personal Records", "Week’s Average", "All Time"].map((name) => (
          <AccordionButton key={name} aria-expanded="false">
            {name}
            <Caret width="14" height="26" viewBox="0 0 14 26" aria-hidden="true"><path d="M14 1v24q0 1-1 0L0 13 13 1q1-1 1 0z" /></Caret>
          </AccordionButton>
        ))}
        <Chart height={520} />
      </Panel>
      <BottomNav />
    </Screen>
  );
}

function BadgesScreen() {
  return (
    <Screen>
      <StatusBar />
      <Profile tab="Badges" />
      <BadgeTitle>City, State</BadgeTitle>
      <BadgeGrid>
        {Array.from({ length: 9 }, (_, i) => (
          <BadgeItem key={i}><Dot $size={182} />Award Name</BadgeItem>
        ))}
      </BadgeGrid>
      <BottomNav />
    </Screen>
  );
}

export default function App() {
  return (
    <>
      <GlobalStyle />
      <Board>
        <HistoryScreen />
        <RunScreen />
        <StatsScreen />
        <BadgesScreen />
      </Board>
    </>
  );
}
